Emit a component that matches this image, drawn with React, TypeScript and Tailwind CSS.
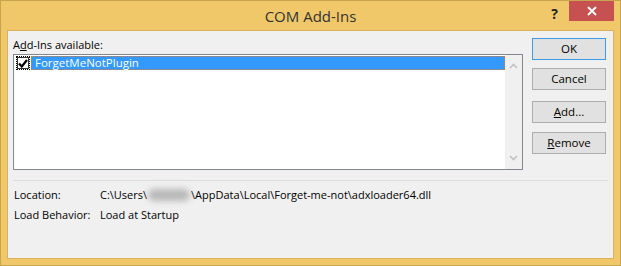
import React from 'react'

const font = { fontFamily: '"Open Sans", "Noto Sans", sans-serif' }

function Chevron({ up }: { up?: boolean }) {
  return (
    <svg width="9" height="6" viewBox="0 0 9 6" className="block">
      <path
        d={up ? 'M1 5 L4.5 1.5 L8 5' : 'M1 1 L4.5 4.5 L8 1'}
        fill="none"
        stroke="#c2c2c2"
        strokeWidth="1.6"
      />
    </svg>
  )
}

function DlgButton({ children, primary }: { children: React.ReactNode; primary?: boolean }) {
  return (
    <div
      className={
        'flex h-[22px] w-[74px] items-center justify-center border bg-[#e1e1e1] text-[11.5px] text-black ' +
        (primary ? 'border-[#3c9be8]' : 'border-[#adadad]')
      }
    >
      {children}
    </div>
  )
}

export default function App() {
  return (
    <div
      className="flex h-[266px] w-[621px] flex-col border border-[#c8a44e] bg-[#f0c86a]"
      style={font}
    >
      {/* Title bar */}
      <div className="relative flex h-[29px] shrink-0 items-start">
        <div className="absolute left-0 right-0 top-[4px] text-center text-[15px] text-[#333]">
          COM Add-Ins
        </div>
        <div className="ml-auto mr-[11px] mt-[2px] text-[14px] font-bold text-[#222]">?</div>
        <div className="mr-[6px] flex h-[20px] w-[45px] items-center justify-center bg-[#c75050]">
          <svg width="10" height="10" viewBox="0 0 10 10">
            <path d="M1 1 L9 9 M9 1 L1 9" stroke="#fff" strokeWidth="2" />
          </svg>
        </div>
      </div>

      {/* Client area */}
      <div className="mx-[6px] mb-[6px] flex flex-1 flex-col border border-[#d9b15a] bg-[#f0f0f0] text-[11px] text-black">
        <div className="flex pl-[5px] pt-[6px]">
          <div className="flex w-[510px] flex-col">
            <div className="h-[17px] leading-[16px]">
              A<span className="underline">d</span>d-Ins available:
            </div>
            <div className="flex h-[116px] border border-[#828790] bg-white">
              <div className="flex-1 pl-[2px] pt-[1px]">
                <div className="flex h-[14px] items-center">
                  <div className="flex h-[14px] w-[14px] items-center justify-center border border-dotted border-black">
                    <div className="flex h-[12px] w-[12px] items-center justify-center border border-[#333] bg-white">
                      <svg width="10" height="9" viewBox="0 0 10 9">
                        <path d="M1 4.5 L3.8 7.5 L9 1" fill="none" stroke="#000" strokeWidth="2.2" />
                      </svg>
                    </div>
                  </div>
                  <div className="ml-[1px] flex h-[14px] flex-1 items-center border border-dotted border-[#e07a2a] bg-[#3399ff] pl-[3px] text-[11.5px] leading-none text-white">
                    ForgetMeNotPlugin
                  </div>
                </div>
              </div>
              <div className="flex w-[17px] flex-col items-center justify-between bg-[#f0f0f0] py-[8px]">
                <Chevron up />
                <Chevron />
              </div>
            </div>
          </div>
          <div className="ml-[9px] flex flex-col pt-[1px]">
            <DlgButton primary>OK</DlgButton>
            <div className="mt-[8px]">
              <DlgButton>Cancel</DlgButton>
            </div>
            <div className="mt-[11px]">
              <DlgButton>
                <span>
                  <span className="underline">A</span>dd...
                </span>
              </DlgButton>
            </div>
            <div className="mt-[9px]">
              <DlgButton>
                <span>
                  <span className="underline">R</span>emove
                </span>
              </DlgButton>
            </div>
          </div>
        </div>

        <div className="ml-[5px] mr-[5px] mt-[10px] h-px bg-[#dcdcdc]" />

        <div className="mt-[4px] flex flex-col pl-[6px] leading-[20px]">
          <div className="flex">
            <div className="w-[86px]">Location:</div>
            <div className="flex items-center">
              C:\Users\
              <span className="mx-[1px] inline-block h-[12px] w-[42px] rounded-full bg-[#b8b8b8] blur-[3px]" />
              \AppData\Local\Forget-me-not\adxloader64.dll
            </div>
          </div>
          <div className="flex">
            <div className="w-[86px]">Load Behavior:</div>
            <div>Load at Startup</div>
          </div>
        </div>
      </div>
    </div>
  )
}
